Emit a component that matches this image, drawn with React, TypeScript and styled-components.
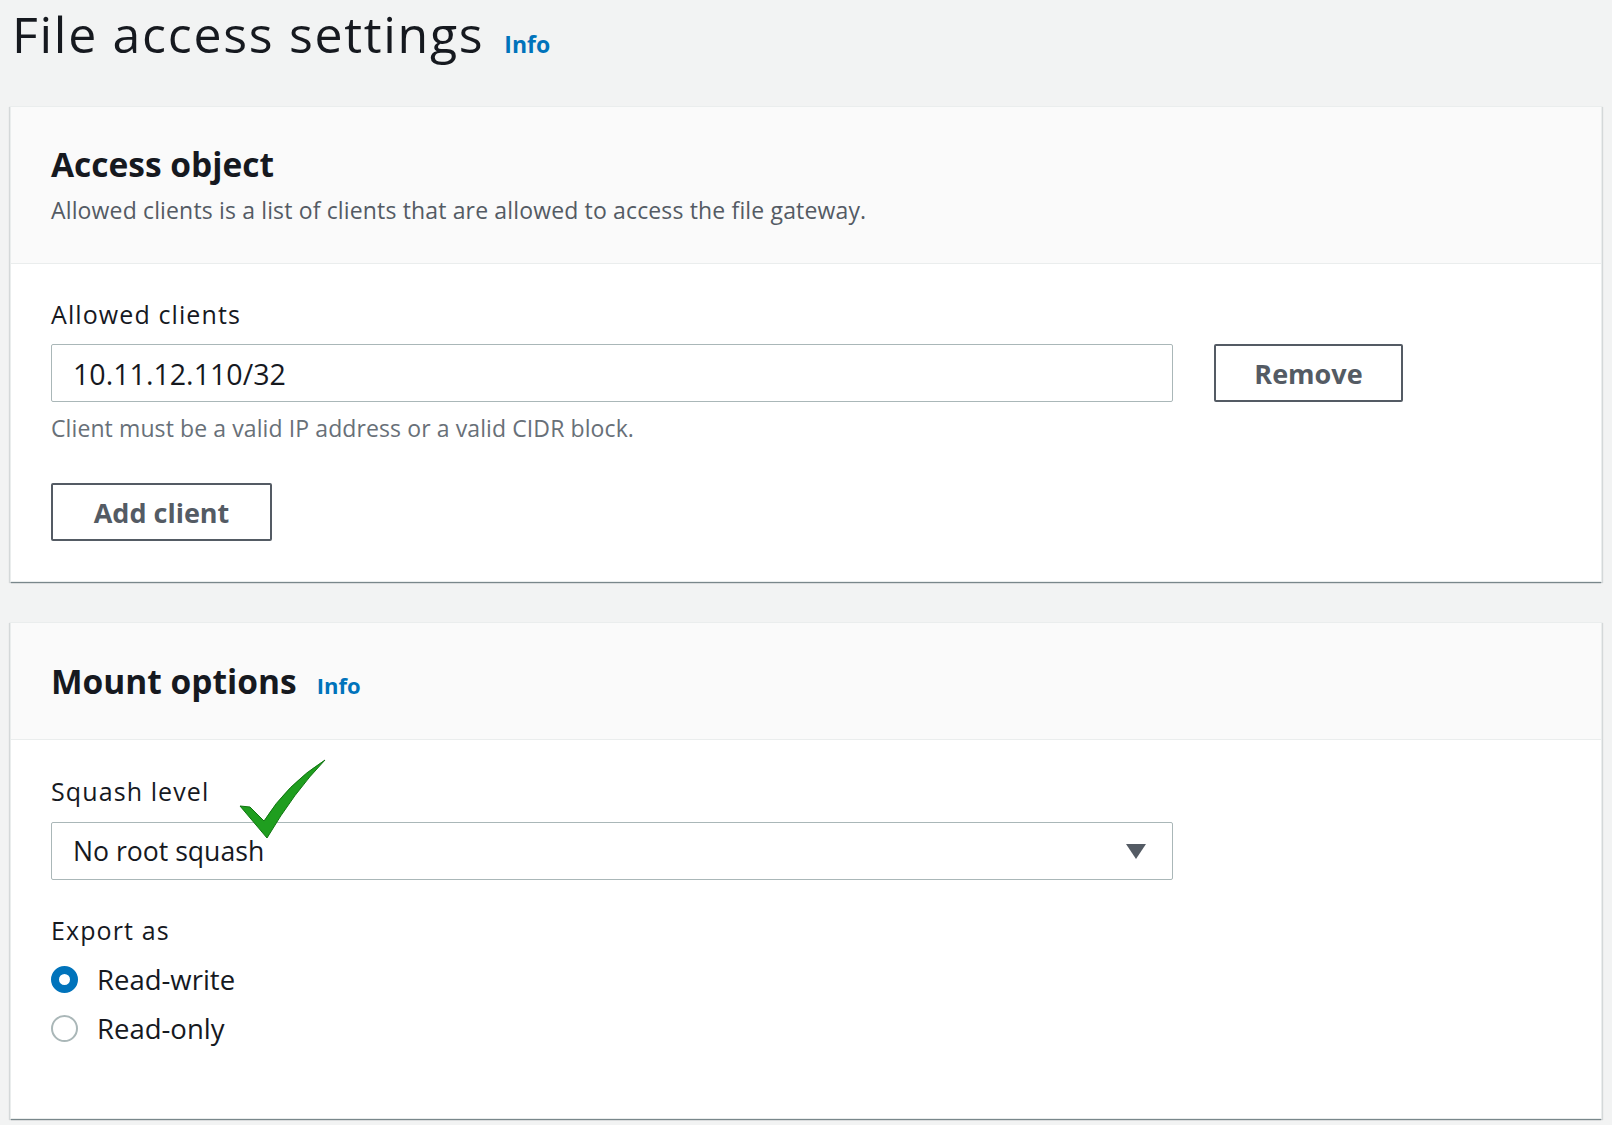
import React from "react";
import styled, { createGlobalStyle } from "styled-components";

const Global = createGlobalStyle`
  html, body { margin: 0; padding: 0; background: #f2f3f3; }
  body { font-family: "Open Sans", "Noto Sans", sans-serif; color: #16191f; }
  * { box-sizing: border-box; }
`;

const Page = styled.div`
  width: 1612px;
  min-height: 1125px;
  padding: 0 10px;
  background: #f2f3f3;
`;

const TitleBar = styled.div`
  height: 106px;
  display: flex;
  align-items: baseline;
  gap: 20px;
  padding: 3px 0 0 2px;
`;

const Title = styled.h1`
  margin: 0;
  font-size: 50px;
  line-height: 63px;
  font-weight: 400;
  color: #16191f;
  letter-spacing: 1.7px;
`;

const InfoLink = styled.a<{ $size: number }>`
  font-size: ${(p) => p.$size}px;
  font-weight: 700;
  color: #0073bb;
  text-decoration: none;
`;

const Panel = styled.section`
  background: #fff;
  border: 1px solid #eaeded;
  box-shadow: 0 2px 1px -1px rgba(0, 28, 36, 0.35), 1px 1px 1px 0 rgba(0, 28, 36, 0.12),
    -1px 1px 1px 0 rgba(0, 28, 36, 0.12);
  & + & { margin-top: 40px; }
`;

const PanelHeader = styled.header<{ $pt: number; $pb: number }>`
  background: #fafafa;
  border-bottom: 1px solid #eaeded;
  padding: ${(p) => p.$pt}px 40px ${(p) => p.$pb}px;
`;

const HeadingRow = styled.div`
  display: flex;
  align-items: baseline;
  gap: 20px;
`;

const Heading = styled.h2`
  margin: 0;
  font-size: 33.5px;
  line-height: 36px;
  font-weight: 700;
  color: #16191f;
`;

const Description = styled.p`
  margin: 15px 0 0;
  font-size: 23px;
  line-height: 26px;
  letter-spacing: 0.15px;
  color: #545b64;
`;

const PanelBody = styled.div<{ $pt: number; $pb: number }>`
  padding: ${(p) => p.$pt}px 40px ${(p) => p.$pb}px;
`;

const Label = styled.div`
  font-size: 25px;
  line-height: 30px;
  letter-spacing: 1.1px;
  color: #16191f;
`;

const FieldRow = styled.div`
  display: flex;
  align-items: center;
  gap: 41px;
  margin-top: 15px;
`;

const TextInput = styled.div<{ $size: number }>`
  width: 1122px;
  height: 58px;
  border: 1.5px solid #aab7b8;
  border-radius: 2px;
  background: #fff;
  display: flex;
  align-items: center;
  padding: 0 21px;
  font-size: ${(p) => p.$size}px;
  color: #16191f;
`;

const SelectBox = styled(TextInput)`
  justify-content: space-between;
  padding-right: 26px;
  margin-top: 16px;
`;

const Button = styled.button<{ $width: number }>`
  width: ${(p) => p.$width}px;
  height: 58px;
  border: 2px solid #545b64;
  border-radius: 2px;
  background: #fff;
  font-family: inherit;
  font-size: 27px;
  font-weight: 700;
  color: #545b64;
  padding: 0;
  cursor: pointer;
`;

const Hint = styled.div`
  margin-top: 13px;
  font-size: 23px;
  line-height: 26px;
  letter-spacing: 0.1px;
  color: #687078;
`;

const AddRow = styled.div`
  margin-top: 42px;
`;

const Field = styled.div`
  position: relative;
`;

const Check = styled.svg`
  position: absolute;
  left: 188px;
  top: -18px;
  width: 90px;
  height: 84px;
  pointer-events: none;
`;

const Group = styled.div`
  margin-top: 35px;
`;

const RadioList = styled.div`
  margin-top: 14px;
  display: flex;
  flex-direction: column;
  gap: 9px;
`;

const RadioRow = styled.label`
  display: flex;
  align-items: center;
  gap: 19px;
  height: 40px;
  font-size: 27.5px;
  color: #16191f;
`;

const RadioDot = styled.span<{ $on: boolean }>`
  width: 27px;
  height: 27px;
  border-radius: 50%;
  flex: none;
  background: #fff;
  border: ${(p) => (p.$on ? "8.5px solid #0073bb" : "2px solid #aab7b8")};
`;

export default function App() {
  return (
    <>
      <Global />
      <Page>
        <TitleBar>
          <Title>File access settings</Title>
          <InfoLink $size={23}>Info</InfoLink>
        </TitleBar>

        <Panel>
          <PanelHeader $pt={39} $pb={40}>
            <Heading>Access object</Heading>
            <Description>
              Allowed clients is a list of clients that are allowed to access the file gateway.
            </Description>
          </PanelHeader>
          <PanelBody $pt={35} $pb={40}>
            <Label>Allowed clients</Label>
            <FieldRow>
              <TextInput $size={28.6}>10.11.12.110/32</TextInput>
              <Button $width={189}>Remove</Button>
            </FieldRow>
            <Hint>Client must be a valid IP address or a valid CIDR block.</Hint>
            <AddRow>
              <Button $width={221}>Add client</Button>
            </AddRow>
          </PanelBody>
        </Panel>

        <Panel>
          <PanelHeader $pt={40} $pb={39}>
            <HeadingRow>
              <Heading>Mount options</Heading>
              <InfoLink $size={22}>Info</InfoLink>
            </HeadingRow>
          </PanelHeader>
          <PanelBody $pt={36} $pb={70}>
            <Field>
              <Label>Squash level</Label>
              <SelectBox $size={26.6}>
                <span>No root squash</span>
                <svg width="20" height="15" viewBox="0 0 20 15">
                  <path d="M0 0 H20 L10 15 Z" fill="#545b64" />
                </svg>
              </SelectBox>
              <Check viewBox="0 0 90 84">
                <path
                  d="M1 48 L11 49 L25 63 Q48 26 86 2 Q55 34 28 80 Z"
                  fill="#1f9e1f"
                  stroke="#107510"
                  strokeWidth="1"
                  strokeLinejoin="round"
                />
              </Check>
            </Field>
            <Group>
              <Label>Export as</Label>
              <RadioList>
                <RadioRow>
                  <RadioDot $on={true} />
                  Read-write
                </RadioRow>
                <RadioRow>
                  <RadioDot $on={false} />
                  Read-only
                </RadioRow>
              </RadioList>
            </Group>
          </PanelBody>
        </Panel>
      </Page>
    </>
  );
}
